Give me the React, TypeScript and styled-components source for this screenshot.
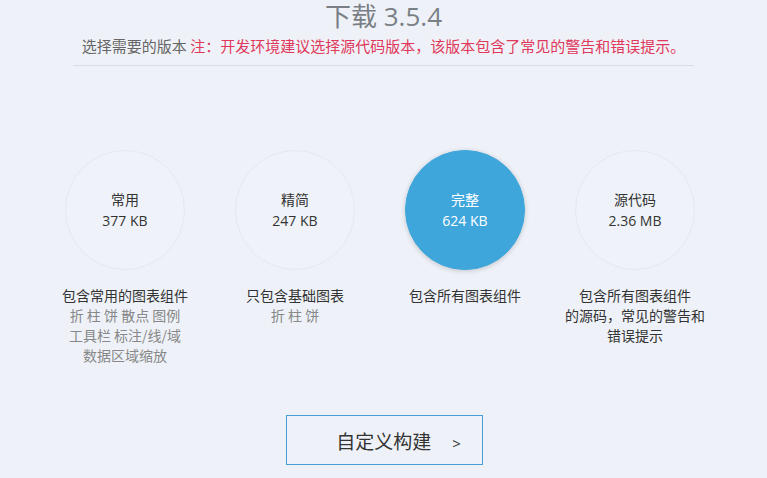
import React from 'react';
import styled, { createGlobalStyle } from 'styled-components';

const GlobalStyle = createGlobalStyle`
    html, body {
        margin: 0;
        padding: 0;
        background: #eef2f8;
    }
    body {
        font-family: "Open Sans", "Noto Sans CJK SC", sans-serif;
        color: #333;
    }
`;

const Page = styled.div`
    width: 767px;
    height: 478px;
    overflow: hidden;
    display: flex;
    flex-direction: column;
    align-items: center;
`;

const Title = styled.h1`
    margin: 0;
    font-size: 26px;
    line-height: 32px;
    font-weight: normal;
    color: #7a7f86;
    font-family: "Open Sans", "Noto Sans CJK SC", sans-serif;
`;

const Subtitle = styled.p`
    margin: 0;
    padding-top: 5px;
    font-size: 15px;
    line-height: 18px;
    color: #666;
    font-family: "Noto Sans CJK SC", sans-serif;
`;

const Note = styled.span`
    color: #e0385a;
`;

const Divider = styled.hr`
    width: 621px;
    margin: 10px 0 0 0;
    border: none;
    border-top: 1px solid #d8dce3;
`;

const Versions = styled.div`
    display: grid;
    grid-template-columns: repeat(4, 170px);
    margin: 84px 0 0 -7px;
`;

const Column = styled.div`
    display: flex;
    flex-direction: column;
    align-items: center;
`;

const Circle = styled.div<{ $active?: boolean }>`
    width: 120px;
    height: 120px;
    box-sizing: border-box;
    border-radius: 50%;
    display: flex;
    flex-direction: column;
    align-items: center;
    justify-content: center;
    background: ${(p) => (p.$active ? '#3fa6dc' : '#eff3f9')};
    border: 1px solid ${(p) => (p.$active ? '#3fa6dc' : '#e5e9ef')};
    box-shadow: ${(p) => (p.$active ? '0 1px 5px rgba(0, 0, 0, 0.18)' : 'none')};
    color: ${(p) => (p.$active ? '#fff' : '#333')};
`;

const Name = styled.div`
    font-family: "Noto Sans CJK SC", sans-serif;
    font-size: 14px;
    line-height: 22px;
`;

const Size = styled.div`
    font-size: 14px;
    line-height: 22px;
`;

const Description = styled.div`
    margin-top: 15px;
    text-align: center;
    font-family: "Noto Sans CJK SC", sans-serif;
    font-size: 14px;
    line-height: 20px;
    color: #333;
`;

const Extra = styled.div`
    color: #888;
`;

const BuildButton = styled.button`
    margin: 50px 0 0 2px;
    width: 197px;
    height: 50px;
    box-sizing: border-box;
    border: 1px solid #4a9ed3;
    background: transparent;
    font-family: "Noto Sans CJK SC", sans-serif;
    font-size: 19px;
    color: #333;
    padding: 0 0 0 28px;
    cursor: pointer;
`;

const Arrow = styled.span`
    margin-left: 21px;
    font-family: "Open Sans", sans-serif;
    font-size: 15px;
`;

const versions = [
    { name: '常用', size: '377 KB', desc: ['包含常用的图表组件'], extra: ['折 柱 饼 散点 图例', '工具栏 标注/线/域', '数据区域缩放'] },
    { name: '精简', size: '247 KB', desc: ['只包含基础图表'], extra: ['折 柱 饼'] },
    { name: '完整', size: '624 KB', desc: ['包含所有图表组件'], extra: [], active: true },
    { name: '源代码', size: '2.36 MB', desc: ['包含所有图表组件', '的源码，常见的警告和', '错误提示'], extra: [] },
];

const App: React.FC = () => {
    return (
        <>
            <GlobalStyle />
            <Page>
                <Title>下载 3.5.4</Title>
                <Subtitle>
                    选择需要的版本 <Note>注：开发环境建议选择源代码版本，该版本包含了常见的警告和错误提示。</Note>
                </Subtitle>
                <Divider />
                <Versions>
                    {versions.map((v) => (
                        <Column key={v.name}>
                            <Circle $active={v.active}>
                                <Name>{v.name}</Name>
                                <Size>{v.size}</Size>
                            </Circle>
                            <Description>
                                {v.desc.map((line) => (
                                    <div key={line}>{line}</div>
                                ))}
                                {v.extra.map((line) => (
                                    <Extra key={line}>{line}</Extra>
                                ))}
                            </Description>
                        </Column>
                    ))}
                </Versions>
                <BuildButton>
                    自定义构建<Arrow>&gt;</Arrow>
                </BuildButton>
            </Page>
        </>
    );
};

export default App;
